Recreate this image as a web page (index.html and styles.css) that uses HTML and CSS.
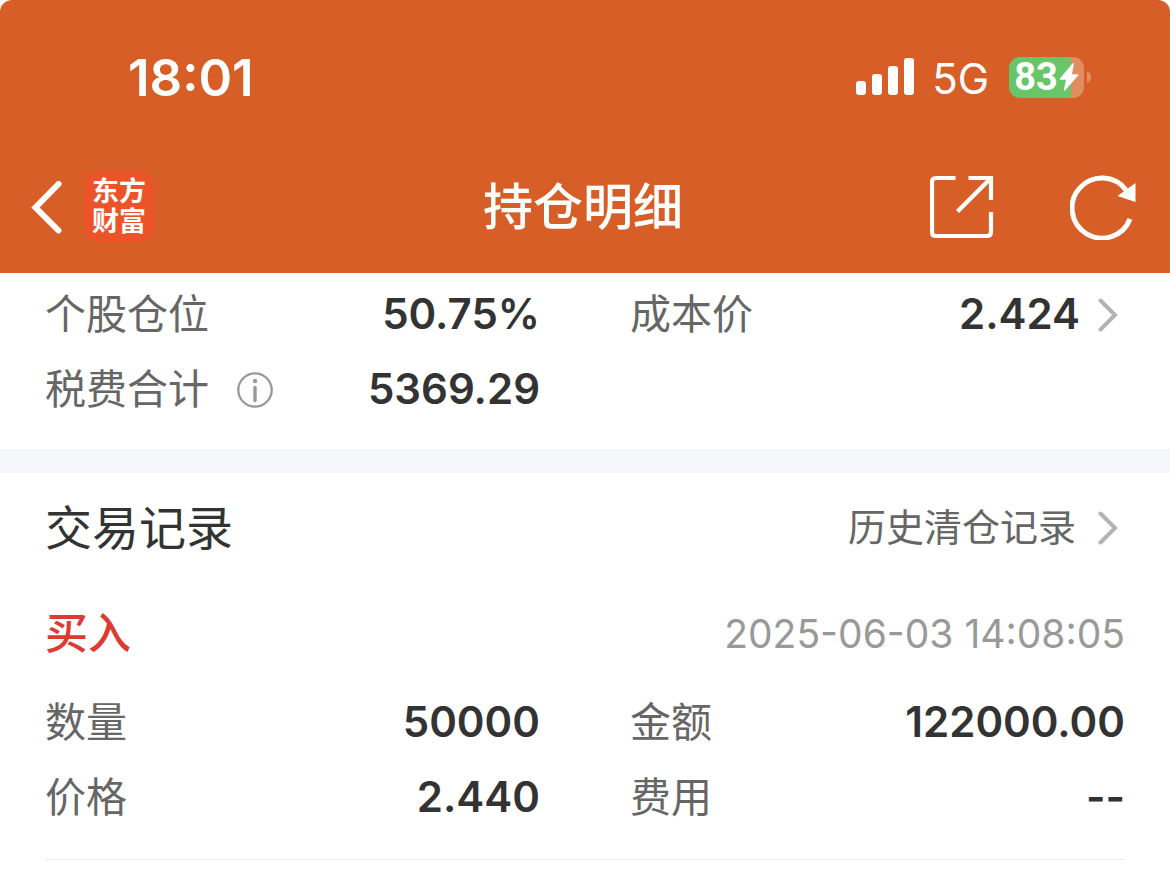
FILE: index.html
```
<!DOCTYPE html>
<html lang="zh-CN">
<head>
<meta charset="utf-8">
<meta name="viewport" content="width=device-width, initial-scale=1">
<title>持仓明细</title>
<link rel="stylesheet" href="styles.css">
</head>
<body>
<header class="header">
  <div class="status">
    <time class="clock">18:01</time>
    <div class="indicators">
      <svg class="signal" width="58" height="38" viewBox="0 0 58 38" fill="#fff" aria-hidden="true">
        <rect x="0" y="23" width="10" height="14" rx="3"/>
        <rect x="16" y="16" width="10" height="21" rx="3"/>
        <rect x="32" y="8" width="10" height="29" rx="3"/>
        <rect x="48" y="0" width="10" height="37" rx="3"/>
      </svg>
      <span class="network">5G</span>
      <div class="battery">
        <div class="cell">
          <span class="level">83</span>
          <svg width="20" height="30" viewBox="0 0 20 30" aria-hidden="true"><path d="M14 2 1.500 17h6.500L5.500 28 18.500 13h-6.500z" fill="#fff" stroke="#fff" stroke-width="1.500" stroke-linejoin="round"/></svg>
        </div>
        <svg width="5" height="14" viewBox="0 0 5 14" aria-hidden="true"><path d="M0 1q4 2 4 6t-4 6z" fill="#e08e5f"/></svg>
      </div>
    </div>
  </div>
  <nav class="nav">
    <div class="nav-left">
      <button class="icon-button" type="button" aria-label="返回">
        <svg width="34" height="56" viewBox="0 0 34 56" fill="none" stroke="#fff" stroke-width="6" stroke-linecap="round"><path d="M28.500 5 5.500 28.500 28.500 51.500"/></svg>
      </button>
      <a class="logo" href="#"><span>东方</span><span>财富</span></a>
    </div>
    <h1 class="title">持仓明细</h1>
    <div class="nav-right">
      <button class="icon-button" type="button" aria-label="分享">
        <svg width="64" height="64" viewBox="0 0 64 64" fill="none" stroke="#fff" stroke-width="4.200"><path d="M25.500 3H6Q2 3 2 7v50q0 4 4 4h51q4 0 4-4V37M38.500 3H61v22M60 4 27.500 36.500"/></svg>
      </button>
      <button class="icon-button" type="button" aria-label="刷新">
        <svg width="66" height="66" viewBox="0 0 66 66" fill="none"><path d="M60 45A30 30 0 1 1 56 16" stroke="#fff" stroke-width="5"/><path d="M65.500 9v19L47.500 22z" fill="#fff"/></svg>
      </button>
    </div>
  </nav>
</header>
<main>
  <section class="summary">
    <dl class="grid">
      <div class="field"><dt>个股仓位</dt><dd>50.75%</dd></div>
      <div class="field has-arrow"><dt>成本价</dt><dd>2.424</dd>
        <svg width="20" height="34" viewBox="0 0 20 34" class="arrow" aria-hidden="true"><path d="M2.500 2.500 17 17 2.500 31.500"/></svg>
      </div>
      <div class="field"><dt>税费合计
        <button class="info" type="button" aria-label="税费说明"><svg width="36" height="36" viewBox="0 0 36 36" fill="none" stroke="#999"><circle cx="18" cy="18" r="16.700" stroke-width="2.300"/><path d="M18 15.500v13" stroke-width="3.400" stroke-linecap="round"/><circle cx="18" cy="9" r="2.200" fill="#999" stroke="none"/></svg></button></dt><dd>5369.29</dd></div>
    </dl>
  </section>
  <section class="records">
    <div class="records-head">
      <h2>交易记录</h2>
      <a class="history" href="#">历史清仓记录
        <svg width="20" height="34" viewBox="0 0 20 34" class="arrow" aria-hidden="true"><path d="M2.500 2.500 17 17 2.500 31.500"/></svg>
      </a>
    </div>
    <article class="record">
      <div class="record-head">
        <h3>买入</h3>
        <time class="when">2025-06-03 14:08:05</time>
      </div>
      <dl class="grid">
        <div class="field"><dt>数量</dt><dd>50000</dd></div>
        <div class="field"><dt>金额</dt><dd>122000.00</dd></div>
        <div class="field"><dt>价格</dt><dd>2.440</dd></div>
        <div class="field"><dt>费用</dt><dd>--</dd></div>
      </dl>
    </article>
  </section>
</main>
</body>
</html>
```
FILE: styles.css
```
* {
  box-sizing: border-box;
}

body {
  margin: 0;
  background: #fff;
  color: #333;
  font-family: Inter, "Noto Sans CJK SC", sans-serif;
  line-height: 1.2;
}

h1, h2, h3, dl, dd {
  margin: 0;
}

a {
  color: inherit;
  text-decoration: none;
}

button {
  padding: 0;
  border: 0;
  background: none;
}

svg {
  display: block;
  flex: none;
}

.header {
  padding-bottom: 2px;
  background: #d75f27;
  color: #fff;
  border-radius: 12px 12px 0 0;
}

.status {
  display: flex;
  justify-content: space-between;
  align-items: center;
  height: 142px;
  padding: 13px 78px 0 128px;
}

.clock {
  font-size: 51px;
  font-weight: 600;
}

.indicators {
  display: flex;
  align-items: center;
}

.network {
  margin: 4px 20px 0 18px;
  font-size: 42px;
}

.battery {
  display: flex;
  align-items: center;
  gap: 3px;
}

.cell {
  display: flex;
  align-items: center;
  justify-content: center;
  gap: 1px;
  width: 75px;
  height: 41px;
  border-radius: 11px;
  background: linear-gradient(to right, #67c667 62px, #e08e5f 62px);
}

.level {
  font-family: Roboto, sans-serif;
  font-size: 38px;
  font-weight: 700;
}

.nav {
  display: grid;
  grid-template-columns: 1fr auto 1fr;
  align-items: center;
  height: 129px;
  padding: 0 34px 0 30px;
}

.nav-left,
.nav-right {
  display: flex;
  align-items: center;
}

.nav-left {
  gap: 20px;
}

.nav-right {
  justify-content: flex-end;
  gap: 76px;
}

.logo {
  display: flex;
  flex-direction: column;
  align-items: center;
  justify-content: center;
  width: 70px;
  height: 70px;
  border-radius: 14px;
  background: #ed5328;
  font-size: 27px;
  font-weight: 700;
  line-height: 30px;
}

.title {
  font-size: 50px;
  font-weight: 500;
}

.summary {
  padding: 4px 45px 22px;
  border-bottom: 24px solid #f6f7fa;
}

.grid {
  display: grid;
  grid-template-columns: 1fr 1fr;
  column-gap: 90px;
}

.field {
  display: flex;
  align-items: center;
  justify-content: space-between;
  height: 75px;
}

.field dt {
  display: flex;
  align-items: center;
  gap: 28px;
  color: #666;
  font-size: 41px;
}

.field dd {
  font-size: 42px;
  font-weight: 600;
}

.has-arrow {
  padding-right: 7px;
}

.has-arrow dd {
  margin-left: auto;
  margin-right: 18px;
}

.arrow {
  fill: none;
  stroke: #b3b3b3;
  stroke-width: 4;
  stroke-linecap: round;
}

.records {
  padding: 0 45px;
}

.records-head,
.record-head {
  display: flex;
  align-items: center;
  justify-content: space-between;
}

.records-head {
  height: 110px;
}

.records-head h2 {
  font-size: 47px;
  font-weight: 400;
}

.history {
  display: flex;
  align-items: center;
  gap: 22px;
  padding-right: 7px;
  color: #666;
  font-size: 38px;
}

.record {
  padding-bottom: 24px;
  border-bottom: 1px solid #ebebeb;
}

.record-head {
  height: 102px;
}

.record-head h3 {
  color: #dd3a33;
  font-size: 43px;
  font-weight: 500;
}

.when {
  color: #999;
  font-size: 39px;
}
```
